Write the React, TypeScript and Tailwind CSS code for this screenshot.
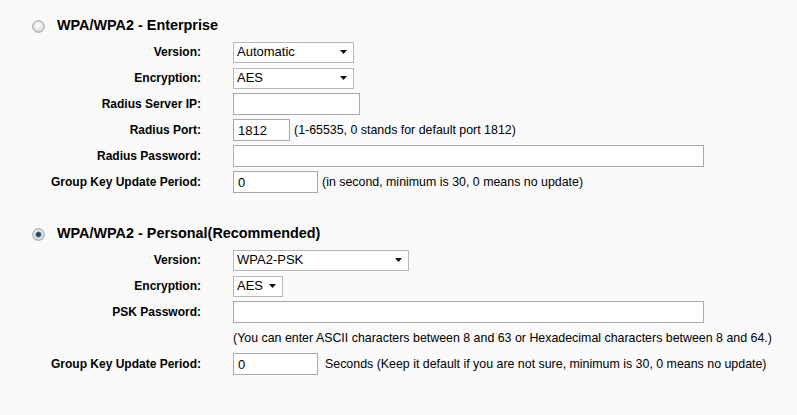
import React from 'react';

function Radio({ checked }: { checked?: boolean }) {
    return (
        <svg width="13" height="13" viewBox="0 0 13 13" className="shrink-0">
            <defs>
                <radialGradient id={checked ? 'rg-on' : 'rg-off'} cx="45%" cy="40%" r="60%">
                    <stop offset="0%" stopColor="#ffffff" />
                    <stop offset="100%" stopColor="#d6d6d6" />
                </radialGradient>
            </defs>
            <circle cx="6.5" cy="6.5" r="5.8" fill={`url(#${checked ? 'rg-on' : 'rg-off'})`} stroke="#9a9a9a" strokeWidth="1" />
            {checked && <circle cx="6.5" cy="6.5" r="2.8" fill="#27435f" stroke="#7ea2c4" strokeWidth="0.8" />}
        </svg>
    );
}

function Row({ label, children }: { label: string; children: React.ReactNode }) {
    return (
        <div className="flex h-[26px] items-center">
            <div className="w-[201px] shrink-0 text-right text-[12px] font-bold text-black">{label}</div>
            <div className="ml-[32px] flex items-center">{children}</div>
        </div>
    );
}

function Select({ value, className }: { value: string; className: string }) {
    return (
        <div className={`flex h-[21px] items-center justify-between border border-[#b8b8b8] bg-white pl-[3px] pr-[6px] text-[13px] text-black ${className}`}>
            <span>{value}</span>
            <svg width="7" height="4" viewBox="0 0 7 4">
                <path d="M0 0 H7 L3.5 4 Z" fill="#111" />
            </svg>
        </div>
    );
}

function TextBox({ value = '', className }: { value?: string; className: string }) {
    return (
        <input
            readOnly
            value={value}
            className={`h-[22px] border border-[#a8a8a8] bg-white px-[4px] text-[13px] text-black outline-none ${className}`}
        />
    );
}

function Heading({ checked, title }: { checked?: boolean; title: string }) {
    return (
        <div className="flex h-[26px] items-center pl-[32px]">
            <Radio checked={checked} />
            <span className="ml-[12px] text-[14.4px] font-bold text-black">{title}</span>
        </div>
    );
}

export default function App() {
    return (
        <div className="min-h-screen bg-[#fafafa] pt-[13px] font-['Liberation_Sans',Arial,sans-serif]">
            <Heading title="WPA/WPA2 - Enterprise" />
            <Row label="Version:">
                <Select value="Automatic" className="w-[121px]" />
            </Row>
            <Row label="Encryption:">
                <Select value="AES" className="w-[121px]" />
            </Row>
            <Row label="Radius Server IP:">
                <TextBox className="w-[127px]" />
            </Row>
            <Row label="Radius Port:">
                <TextBox value="1812" className="w-[57px]" />
                <span className="ml-[4px] text-[12.4px] text-black">(1-65535, 0 stands for default port 1812)</span>
            </Row>
            <Row label="Radius Password:">
                <TextBox className="w-[471px]" />
            </Row>
            <Row label="Group Key Update Period:">
                <TextBox value="0" className="w-[85px]" />
                <span className="ml-[4px] text-[12.4px] text-black">(in second, minimum is 30, 0 means no update)</span>
            </Row>

            <div className="mt-[26px]">
                <Heading checked title="WPA/WPA2 - Personal(Recommended)" />
                <Row label="Version:">
                    <Select value="WPA2-PSK" className="w-[176px]" />
                </Row>
                <Row label="Encryption:">
                    <Select value="AES" className="w-[50px]" />
                </Row>
                <Row label="PSK Password:">
                    <TextBox className="w-[471px]" />
                </Row>
                <Row label="">
                    <span className="text-[12.4px] text-black">
                        (You can enter ASCII characters between 8 and 63 or Hexadecimal characters between 8 and 64.)
                    </span>
                </Row>
                <Row label="Group Key Update Period:">
                    <TextBox value="0" className="w-[85px]" />
                    <span className="ml-[7px] text-[12.4px] text-black">
                        Seconds (Keep it default if you are not sure, minimum is 30, 0 means no update)
                    </span>
                </Row>
            </div>
        </div>
    );
}
